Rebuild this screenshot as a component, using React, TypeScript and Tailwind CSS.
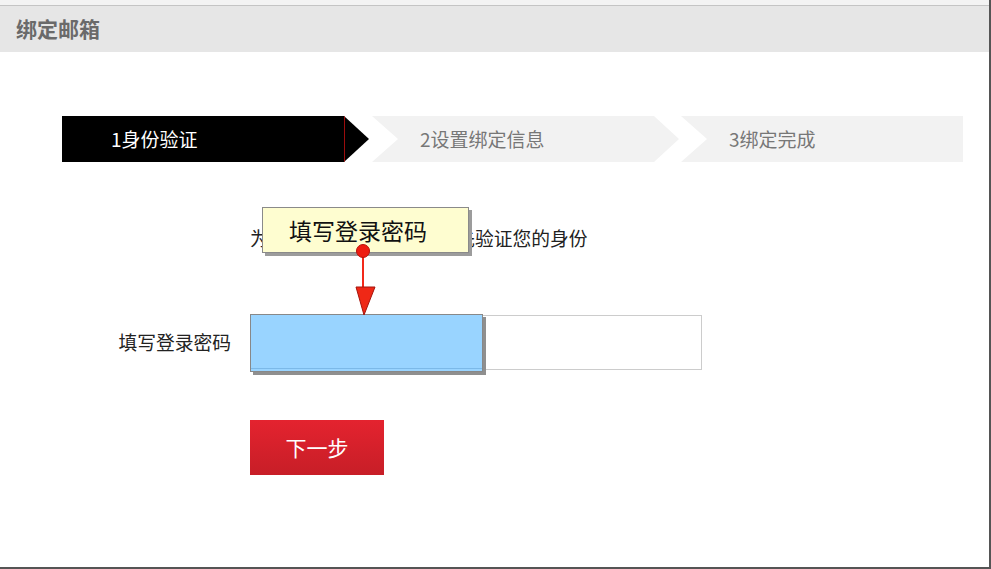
export default function App() {
  return (
    <div className="relative w-[991px] h-[569px] overflow-hidden bg-white border-r-2 border-b-2 border-[#555] font-['Noto_Sans_CJK_SC',sans-serif]">
      {/* top strip + title bar */}
      <div className="h-[6px] bg-[#f3f3f3] border-b border-[#c4c4c4]" />
      <div className="h-[46px] bg-[#e6e6e6] flex items-center pl-4 text-[21px] font-bold text-[#6a6a6a]">
        绑定邮箱
      </div>

      {/* steps */}
      <div className="mt-[64px] h-[46px] flex pl-[62px]">
        <div className="w-[307px] h-full bg-black [clip-path:polygon(0_0,282px_0,100%_50%,282px_100%,0_100%)]">
          <div className="w-[283px] h-full border-r border-[#9b0d0d] flex items-center pl-[49px] text-[19px] text-white">
            1身份验证
          </div>
        </div>
        <div className="ml-[3px] w-[307px] h-full bg-[#f2f2f2] flex items-center pl-[48px] text-[19px] text-[#777] [clip-path:polygon(0_0,282px_0,100%_50%,282px_100%,0_100%,26px_50%)]">
          2设置绑定信息
        </div>
        <div className="ml-[2px] w-[282px] h-full bg-[#f2f2f2] flex items-center pl-[48px] text-[19px] text-[#777] [clip-path:polygon(0_0,100%_0,100%_100%,0_100%,26px_50%)]">
          3绑定完成
        </div>
      </div>

      {/* intro text */}
      <p className="mt-[62px] pl-[250px] text-[18.75px] leading-[27px] text-[#222]">
        为保障您的账号安全，请先验证您的身份
      </p>

      {/* password row */}
      <div className="mt-[64px] flex items-center">
        <label className="w-[250px] pr-[19px] text-right text-[18.75px] text-[#222]">填写登录密码</label>
        <div className="w-[452px] h-[55px] border border-[#cccccc] bg-white" />
      </div>

      <button className="mt-[50px] ml-[250px] w-[134px] h-[55px] bg-gradient-to-b from-[#e4232f] to-[#c71e27] text-white text-[21px] flex items-center justify-center">
        下一步
      </button>

      {/* annotation overlays */}
      <div className="absolute left-[262px] top-[207px] w-[207px] h-[46px] bg-[#fefdd0] border border-[#8a8a8a] shadow-[3px_3px_0_#9c9c9c] flex items-center pl-[26px] text-[23px] text-[#111]">
        填写登录密码
      </div>
      <div className="absolute left-[250px] top-[314px] w-[233px] h-[58px] bg-[#99d4ff] border border-[#888] shadow-[3px_3px_0_#8f8f8f]">
        <div className="mt-[53px] h-px bg-[#7cb9e8]" />
      </div>
      <svg className="absolute left-[350px] top-[240px]" width="30" height="80" viewBox="0 0 30 80">
        <line x1="13" y1="11" x2="13" y2="50" stroke="#f2291a" strokeWidth="2" />
        <circle cx="13" cy="11" r="6.5" fill="#ee1c10" stroke="#b81008" strokeWidth="1" />
        <polygon points="6,47 25,47 14,75" fill="#ef2816" stroke="#a5140c" strokeWidth="1" />
      </svg>
    </div>
  );
}
